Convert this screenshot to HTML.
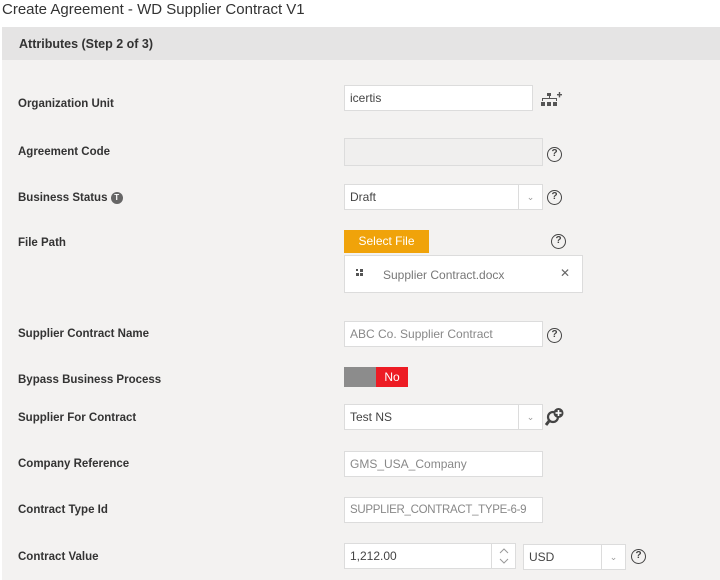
<!DOCTYPE html>
<html><head><meta charset="utf-8"><style>
*{box-sizing:border-box;margin:0;padding:0}
body{width:720px;height:580px;background:#fff;font-family:"Liberation Sans",sans-serif;position:relative;overflow:hidden;color:#333}
.a{position:absolute}
.title{left:2px;top:1px;font-size:15px;color:#333}
.hdr{left:2px;top:27px;width:718px;height:33px;background:#e5e4e4}
.hdr span{position:absolute;left:17px;top:10px;font-size:12.5px;font-weight:bold;color:#333}
.body{left:2px;top:60px;width:718px;height:520px;background:#f3f2f1}
.lbl{left:18px;font-size:11.5px;font-weight:bold;color:#333}
.in{background:#fff;border:1px solid #dcdcdc;font-size:12px;padding-left:5px;line-height:24px;color:#444;height:26px;white-space:nowrap;overflow:hidden}
.ph{color:#888}
.sel .arr{position:absolute;right:0;top:0;width:24px;height:100%;border-left:1px solid #dcdcdc;color:#999;font-size:9px;text-align:center;line-height:24px}
.q{width:15px;height:15px;border:1.5px solid #444;border-radius:50%;font-size:10px;font-weight:bold;text-align:center;line-height:12px;color:#444}
</style></head><body>
<div class="a title">Create Agreement - WD Supplier Contract V1</div>
<div class="a hdr"><span>Attributes (Step 2 of 3)</span></div>
<div class="a body"></div>

<div class="a lbl" style="top:98px">Organization Unit</div>
<div class="a in" style="left:344px;top:85px;width:189px">icertis</div>
<svg class="a" style="left:540px;top:91px" width="22" height="17" viewBox="0 0 22 17"><g fill="#555"><rect x="7" y="2" width="4" height="3"/><rect x="9" y="5" width="1" height="3"/><rect x="2" y="7" width="15" height="1"/><rect x="2" y="7" width="1" height="3"/><rect x="16" y="7" width="1" height="3"/><rect x="1" y="11" width="4" height="4"/><rect x="7" y="11" width="4" height="4"/><rect x="13" y="11" width="4" height="4"/><rect x="17" y="3" width="5" height="1.4"/><rect x="18.8" y="1" width="1.4" height="5.4"/></g></svg>

<div class="a lbl" style="top:146px">Agreement Code</div>
<div class="a in" style="left:344px;top:138px;width:199px;height:28px;background:#f0efee"></div>
<div class="a q" style="left:547px;top:147px">?</div>

<div class="a lbl" style="top:192px">Business Status <span style="display:inline-block;width:12px;height:12px;border-radius:50%;background:#666;color:#fff;font-size:8px;text-align:center;line-height:12px;vertical-align:1px">T</span></div>
<div class="a in sel" style="left:344px;top:184px;width:199px">Draft<div class="arr">⌄</div></div>
<div class="a q" style="left:547px;top:190px">?</div>

<div class="a lbl" style="top:237px">File Path</div>
<div class="a" style="left:344px;top:230px;width:85px;height:23px;background:#f0a30a;color:#fff;font-size:12px;text-align:center;line-height:23px">Select File</div>
<div class="a q" style="left:551px;top:234px">?</div>
<div class="a" style="left:344px;top:255px;width:239px;height:38px;background:#fff;border:1px solid #dcdcdc"></div>
<svg class="a" style="left:356px;top:269px" width="8" height="8"><g fill="#555"><rect x="4" y="0" width="3" height="3"/><rect x="0" y="4" width="3" height="3"/><rect x="4" y="4" width="3" height="3"/><rect x="0" y="0" width="2" height="2"/></g></svg>
<div class="a" style="left:383px;top:268px;font-size:12px;color:#777">Supplier Contract.docx</div>
<div class="a" style="left:560px;top:266px;font-size:12px;color:#666">✕</div>

<div class="a lbl" style="top:328px">Supplier Contract Name</div>
<div class="a in ph" style="left:344px;top:321px;width:199px">ABC Co. Supplier Contract</div>
<div class="a q" style="left:547px;top:328px">?</div>

<div class="a lbl" style="top:374px">Bypass Business Process</div>
<div class="a" style="left:344px;top:367px;width:32px;height:20px;background:#8c8c8c"></div>
<div class="a" style="left:376px;top:367px;width:32px;height:20px;background:#ed1c24;color:#fff;font-size:12px;text-align:center;line-height:20px">No</div>

<div class="a lbl" style="top:412px">Supplier For Contract</div>
<div class="a in sel" style="left:344px;top:404px;width:199px">Test NS<div class="arr">⌄</div></div>
<svg class="a" style="left:545px;top:407px" width="20" height="20" viewBox="0 0 20 20"><circle cx="8" cy="10" r="5" fill="none" stroke="#444" stroke-width="2.2"/><line x1="4.5" y1="13.5" x2="1" y2="18" stroke="#444" stroke-width="3"/><circle cx="13.5" cy="6" r="5" fill="#444"/><rect x="12.7" y="3" width="1.6" height="6" fill="#fff"/><rect x="10.5" y="5.2" width="6" height="1.6" fill="#fff"/></svg>

<div class="a lbl" style="top:458px">Company Reference</div>
<div class="a in ph" style="left:344px;top:451px;width:199px">GMS_USA_Company</div>

<div class="a lbl" style="top:504px">Contract Type Id</div>
<div class="a in ph" style="left:344px;top:497px;width:199px;font-size:11.5px;letter-spacing:-0.3px">SUPPLIER_CONTRACT_TYPE-6-9</div>

<div class="a lbl" style="top:551px">Contract Value</div>
<div class="a in" style="left:344px;top:543px;width:172px">1,212.00<svg style="position:absolute;right:0;top:0;border-left:1px solid #dcdcdc" width="24" height="24"><polyline points="8,9 12,5 16,9" fill="none" stroke="#999" stroke-width="1"/><polyline points="8,15 12,19 16,15" fill="none" stroke="#999" stroke-width="1"/></svg></div>
<div class="a in sel" style="left:523px;top:544px;width:103px">USD<div class="arr">⌄</div></div>
<div class="a q" style="left:631px;top:549px">?</div>
</body></html>
